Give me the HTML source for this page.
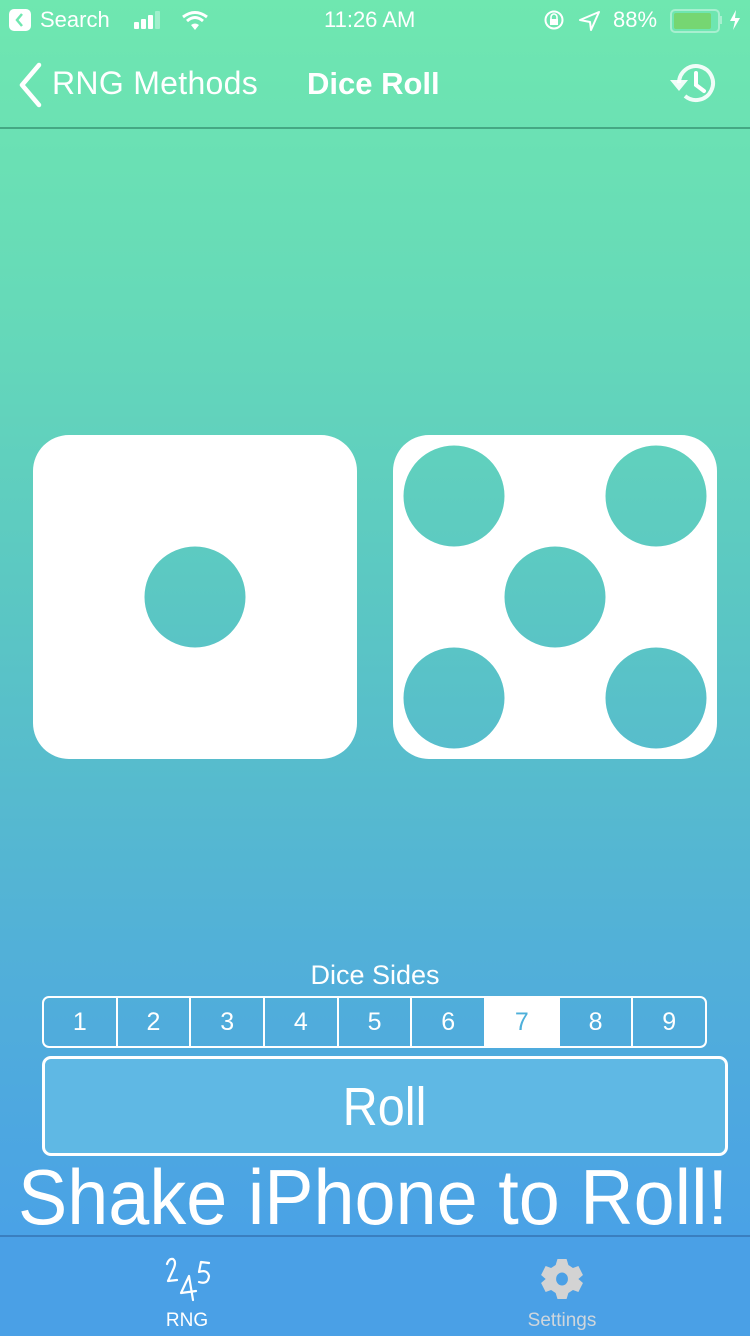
<!DOCTYPE html>
<html><head><meta charset="utf-8"><style>
html,body{margin:0;padding:0}
body{width:750px;height:1334px;position:relative;overflow:hidden;font-family:"Liberation Sans",sans-serif;color:#fff;
background:linear-gradient(180deg,#6fe7b0 0px,#66dab8 300px,#5bc7c3 600px,#52b0d8 950px,#4aa2e6 1235px,#4aa0e6 1334px);}
.abs{position:absolute}
.seg{position:absolute;left:42px;top:996px;width:661px;height:48px;border:2px solid #fff;border-radius:7px;display:flex;overflow:hidden}
.seg div{flex:1;border-right:2px solid #fff;text-align:center;line-height:48px;font-size:25px}
.seg div:last-child{border-right:none}
.seg .on{background:#fff;color:#4eb0da}
.roll{position:absolute;left:42px;top:1056px;width:680px;height:94px;border:3px solid #fff;border-radius:9px;background:#5fb8e4;text-align:center;line-height:96px;font-size:54px}
.tab{position:absolute;left:0;top:1235px;width:750px;height:99px;background:#4aa0e6;border-top:2px solid #3a7fc0}
</style></head><body>
<div class="abs" style="left:9px;top:9px;width:22px;height:22px;background:#fff;border-radius:5px"></div>
<svg class="abs" style="left:9px;top:9px" width="22" height="22"><path d="M13 5 L8 11 L13 17" stroke="#6fe7b0" stroke-width="2.5" fill="none"/></svg>
<div class="abs" style="left:40px;top:7px;font-size:22px">Search</div>
<svg class="abs" style="left:132px;top:10px" width="90" height="22">
<rect x="2" y="12" width="5" height="7" rx="1" fill="#fff"/><rect x="9" y="9" width="5" height="10" rx="1" fill="#fff"/><rect x="16" y="5" width="5" height="14" rx="1" fill="#fff"/><rect x="23" y="1" width="5" height="18" rx="1" fill="#9ff0cc"/>
<path d="M51 7 Q63 -2 75 7" stroke="#fff" stroke-width="3" fill="none"/><path d="M55 11 Q63 4 71 11" stroke="#fff" stroke-width="3" fill="none"/><path d="M59 15 L63 20 L67 15 Q63 12 59 15Z" fill="#fff"/></svg>
<div class="abs" style="left:324px;top:7px;font-size:22px">11:26 AM</div>
<svg class="abs" style="left:543px;top:9px" width="60" height="22"><circle cx="11" cy="11" r="8.5" stroke="#fff" stroke-width="2" fill="none"/><rect x="7" y="10" width="8" height="6" fill="#fff"/><path d="M8 10 V8 a3 3 0 0 1 6 0 V10" stroke="#fff" stroke-width="1.6" fill="none"/>
<path d="M37 11 L56 3 L48 21 L47 13 Z" stroke="#fff" stroke-width="2" fill="none" stroke-linejoin="round"/></svg>
<div class="abs" style="left:613px;top:7px;font-size:22px">88%</div>
<div class="abs" style="left:670px;top:9px;width:46px;height:20px;border:2px solid #a8efd0;border-radius:5px"></div>
<div class="abs" style="left:674px;top:13px;width:37px;height:16px;background:#76d672;border-radius:2px"></div>
<div class="abs" style="left:719px;top:16px;width:3px;height:8px;background:#a8efd0"></div>
<svg class="abs" style="left:728px;top:9px" width="14" height="22"><path d="M8 1 L2 12 H7 L5 21 L12 9 H7 Z" fill="#fff"/></svg>
<svg class="abs" style="left:16px;top:62px" width="28" height="46"><path d="M23 3 L6 23 L23 43" stroke="#fff" stroke-width="4.5" fill="none" stroke-linecap="round" stroke-linejoin="round"/></svg>
<div class="abs" style="left:52px;top:65px;font-size:32px;letter-spacing:0.3px">RNG Methods</div>
<div class="abs" style="left:307px;top:66px;font-size:31px;font-weight:bold">Dice Roll</div>
<svg class="abs" style="left:664px;top:58px" width="60" height="50"><path d="M15 25 A17 17 0 1 1 21 38" stroke="#fff" stroke-width="4" fill="none" opacity=".9"/><path d="M6 22 L24 22 L15 33 Z" fill="#fff" opacity=".9"/><path d="M32 15 V27 L40 33" stroke="#fff" stroke-width="4" fill="none" stroke-linecap="round"/></svg>
<div class="abs" style="left:0;top:127px;width:750px;height:2px;background:#45a884"></div>
<svg class="abs" style="left:0;top:0" width="750" height="1334">
<path fill="#fff" fill-rule="evenodd" d="M69 435 H321 A36 36 0 0 1 357 471 V723 A36 36 0 0 1 321 759 H69 A36 36 0 0 1 33 723 V471 A36 36 0 0 1 69 435 Z M144.5 597 a50.5 50.5 0 1 0 101 0 a50.5 50.5 0 1 0 -101 0 Z"/>
<path fill="#fff" fill-rule="evenodd" d="M429 435 H681 A36 36 0 0 1 717 471 V723 A36 36 0 0 1 681 759 H429 A36 36 0 0 1 393 723 V471 A36 36 0 0 1 429 435 Z
M403.5 496 a50.5 50.5 0 1 0 101 0 a50.5 50.5 0 1 0 -101 0 Z
M605.5 496 a50.5 50.5 0 1 0 101 0 a50.5 50.5 0 1 0 -101 0 Z
M504.5 597 a50.5 50.5 0 1 0 101 0 a50.5 50.5 0 1 0 -101 0 Z
M403.5 698 a50.5 50.5 0 1 0 101 0 a50.5 50.5 0 1 0 -101 0 Z
M605.5 698 a50.5 50.5 0 1 0 101 0 a50.5 50.5 0 1 0 -101 0 Z"/>
<text x="18" y="1224" font-family="Liberation Sans" font-size="78" fill="#fff" textLength="710" lengthAdjust="spacingAndGlyphs">Shake iPhone to Roll!</text>
</svg>
<div class="abs" style="left:0;top:960px;width:750px;text-align:center;font-size:27px">Dice Sides</div>
<div class="seg"><div>1</div><div>2</div><div>3</div><div>4</div><div>5</div><div>6</div><div class="on">7</div><div>8</div><div>9</div></div>
<div class="roll"><span style="display:inline-block;transform:scaleX(0.9)">Roll</span></div>
<div class="tab">
<svg class="abs" style="left:160px;top:18px" width="56" height="50"><g stroke="#fff" stroke-width="2.2" fill="none" stroke-linejoin="round" stroke-linecap="round">
<path d="M7 9 Q9 3 13 4 Q17 7 13 15 L8 26 L17 25"/>
<path d="M49 8 L41 7 L39 17 Q47 14 49 21 Q48 30 39 27"/>
<path d="M33 45 L29 21 L21 38 L36 36"/></g></svg>
<div class="abs" style="left:0;width:374px;top:73px;text-align:center;font-size:19px">RNG</div>
<svg class="abs" style="left:540px;top:20px" width="44" height="44" viewBox="0 0 44 44"><path fill="#d3d3d3" fill-rule="evenodd" d="M17 2 H27 L29 8 L34 11 L40 9 L45 18 L40 22 L45 26 L40 35 L34 33 L29 36 L27 42 H17 L15 36 L10 33 L4 35 L-1 26 L4 22 L-1 18 L4 9 L10 11 L15 8 Z M15.5 22 a6.5 6.5 0 1 0 13 0 a6.5 6.5 0 1 0 -13 0Z" transform="translate(2 0) scale(0.91 1)"/></svg>
<div class="abs" style="left:375px;width:374px;top:73px;text-align:center;font-size:19px;color:#cfd6dc">Settings</div>
</div>
</body></html>
